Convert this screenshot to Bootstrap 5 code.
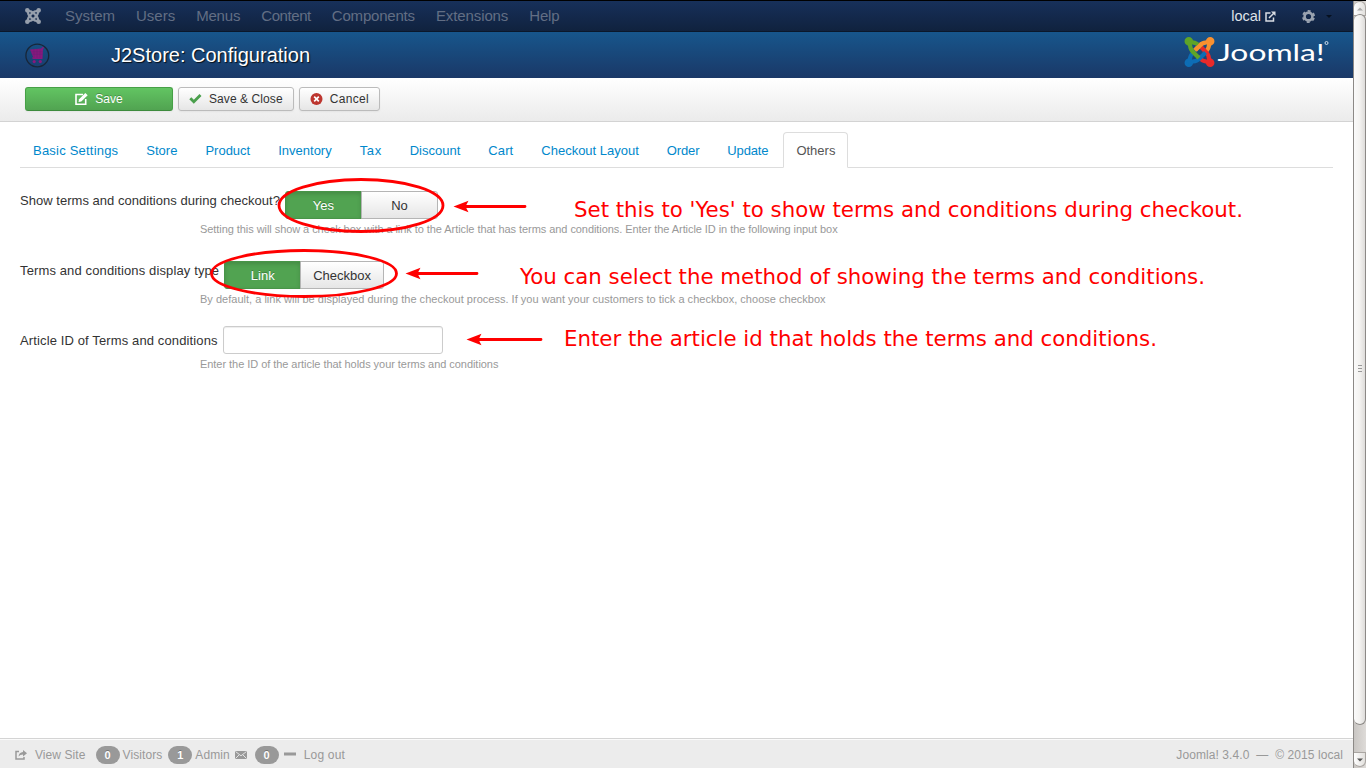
<!DOCTYPE html>
<html lang="en">
<head>
<meta charset="utf-8">
<meta name="viewport" content="width=device-width, initial-scale=1">
<title>J2Store: Configuration</title>
<link href="https://cdn.jsdelivr.net/npm/bootstrap@5.3.0/dist/css/bootstrap.min.css" rel="stylesheet">
<style>
body{font-family:"Liberation Sans",Arial,sans-serif;font-size:13px;line-height:18px;color:#333;height:768px;overflow:hidden;background:#fff}
.shell{height:768px;border-top:1px solid #000}
.topbar{height:31px;background:linear-gradient(#17305a,#10223e);border-bottom:1px solid #0b182b;padding:0 24px 0 25px;font-size:15px}
.topbar .nav-link{padding:0;color:#626e84;line-height:30px}
.menu-list{gap:21px;margin-left:24px}
.menu-list :nth-child(3),.menu-list :nth-child(5),.menu-list :nth-child(7){letter-spacing:-.2px}
.menu-list :nth-child(4){letter-spacing:-.42px}
.menu-list :nth-child(6){letter-spacing:-.1px}
.site-link{color:#dfe2e8;font-size:14.5px}
.titlebar{height:46px;background:linear-gradient(#17568c,#1a3867);padding:0 24px 0 25px}
.page-name{font-size:20px;line-height:46px;color:#fff;text-shadow:1px 1px 1px rgba(0,0,0,.8);margin:0 0 0 61px;font-weight:400}
.toolstrip{height:44px;background:linear-gradient(#fff,#ebebeb);border-bottom:1px solid #d3d3d3;padding:9px 25px 0;gap:5px}
.tool{height:24px;border:1px solid #bbb;border-radius:3px;padding:0 10px;font-size:12px;line-height:20px;color:#333;background:linear-gradient(#fff,#e6e6e6);box-shadow:0 1px 2px rgba(0,0,0,.05);letter-spacing:.08px}
.tool svg{margin-right:7px}
.tool-cancel{letter-spacing:.33px}
.tool-save{width:148px;color:#fff;border-color:#46a046 #46a046 #3d8b3d;background:linear-gradient(#62c462,#51a351);text-shadow:0 -1px 0 rgba(0,0,0,.25)}
.tabs{margin:10px 20px 0;border-bottom:1px solid #ddd;gap:2px}
.tabs .nav-link{padding:9px 12px 7px;line-height:18px;height:36px;color:#08c;border-radius:4px 4px 0 0;margin-bottom:-1px}
.tabs .nav-link.active{color:#555;border-color:#ddd #ddd #fff}
.tabs :nth-child(1){letter-spacing:.21px}
.tabs :nth-child(5){letter-spacing:.6px}
.tabs :nth-child(7){letter-spacing:.1px}
.tabs :nth-child(9),.tabs :nth-child(10){letter-spacing:-.15px}
.settings{padding:23px 20px 0}
.setting{height:70px}
.setting.last-one{margin-top:-5px}
.cap{line-height:20px;white-space:nowrap;margin-right:5px;letter-spacing:.125px}
.setting:first-child .cap{letter-spacing:.03px}
.last-one .cap{line-height:30px}
.hint{font-size:11px;line-height:18px;color:#999;margin:1px 0 0 180px;white-space:nowrap;letter-spacing:.015px}
.setting:first-child .hint{letter-spacing:-.062px}
.last-one .hint{margin-top:-1px;letter-spacing:-.048px}
.pick{height:28px}
.pick .btn{min-width:77px;height:28px;padding:2px 12px 0;font-size:13px;line-height:24px;border:1px solid #b5b5b5;color:#333;background:linear-gradient(#fff,#e6e6e6);border-radius:3px}
.pick .btn.on{color:#fff;background:#51a351;border-color:#489548;box-shadow:inset 0 2px 4px rgba(0,0,0,.15);text-shadow:0 -1px 0 rgba(0,0,0,.25)}
.field{width:220px;height:28px;border:1px solid #ccc;border-radius:3px;box-shadow:inset 0 1px 1px rgba(0,0,0,.075);padding:4px 6px}
.status{height:30px;margin-top:auto;border-top:1px solid #d4d4d4;background:#ececec;box-shadow:inset 0 1px #fbfbfb;font-size:12px;color:#999;padding:2px 10px 0 15px;letter-spacing:.08px}
.pill{width:24px;height:18px;border-radius:9px;background:#999;color:#fff;font-size:11px;font-weight:700;line-height:18px;text-align:center;text-shadow:0 -1px 0 rgba(0,0,0,.25)}
.rail{width:13px;background:linear-gradient(90deg,#c9c6c3,#dedbd8);border-left:1px solid #8c8986;padding-bottom:1px}
.rail-end{height:15px;background:linear-gradient(90deg,#fff,#e2e0dd);border:1px solid #aaa6a2;border-left:0}
.thumb{height:711px;margin-top:-2px;padding-bottom:3px;gap:2px;background:linear-gradient(90deg,#fafafa,#f4f3f1 50%,#dedcda);border:1px solid #8c8986;border-left:0;border-radius:6px}
.thumb i{width:4px;height:1px;background:#999}
.notes{left:0;top:0;pointer-events:none}
.notes text{font-family:"DejaVu Sans",sans-serif;font-size:21.33px;fill:#f00}
</style>
</head>
<body>
<svg width="0" height="0" class="position-absolute">
  <defs>
    <g id="arm" fill="none"><circle cx="4.300" cy="4.300" r="2.100" stroke-width="4.300"/><path stroke-width="4.200" d="M4 4L9 5.700C12 5.700 13 7 16.500 10.500M4 4L5.700 9C5.700 12 6.500 13 9 15.500L14.500 21"/></g>
  </defs>
</svg>
<div class="shell d-flex">
  <div class="flex-grow-1 d-flex flex-column">
    <nav class="topbar d-flex align-items-center">
      <svg width="16" height="16" viewBox="0 0 30 30" stroke="#969fac"><use href="#arm"/><use href="#arm" transform="rotate(90 15 15)"/><use href="#arm" transform="rotate(180 15 15)"/><use href="#arm" transform="rotate(270 15 15)"/></svg>
      <div class="nav menu-list">
        <a class="nav-link">System</a><a class="nav-link">Users</a><a class="nav-link">Menus</a><a class="nav-link">Content</a><a class="nav-link">Components</a><a class="nav-link">Extensions</a><a class="nav-link">Help</a>
      </div>
      <span class="ms-auto site-link">local</span>
      <svg class="ms-1" width="11" height="11" viewBox="0 0 11 11" fill="none" stroke="#d9dde3" stroke-width="1.500"><path d="M5.500 2H1v8h7.500V6.500M4 7l5-5"/><path d="M6 .5h4.500V5z" fill="#d9dde3" stroke="none"/></svg>
      <svg style="margin-left:26px" width="13" height="13" viewBox="0 0 14 14" fill="none" stroke="#9aa3b0"><circle cx="7" cy="7" r="4.200" stroke-width="2.800"/><circle cx="7" cy="7" r="6" stroke-width="2" stroke-dasharray="3.200 3.083" stroke-dashoffset="-1.540"/></svg>
      <svg style="margin-left:10px;margin-right:-4px" width="8" height="5" viewBox="0 0 8 5"><path d="M1 1h6L4 4z" fill="#06101f"/></svg>
    </nav>
    <header class="titlebar d-flex align-items-center">
      <svg width="25" height="25" viewBox="0 0 25 25"><circle cx="12.300" cy="12.500" r="11.400" fill="none" stroke="#182638" stroke-width="1.300"/><path d="M5 6.500l11.500-1 .5-1.200h2v1.200h-1L17.500 16H7.500l-.3-1.800h1z" fill="#89187d"/><path d="M6 8.700h11.500M6.500 11.300h11M9 6v9M12 6v9M15 6v9" stroke="#5c2676" stroke-width=".35"/><circle cx="9.200" cy="18.600" r="1.600" fill="#89187d"/><circle cx="15.300" cy="18.600" r="1.600" fill="#89187d"/></svg>
      <h1 class="page-name">J2Store: Configuration</h1>
      <svg class="ms-auto" style="margin-top:-6px" width="145" height="32" viewBox="0 0 145 32">
        <g transform="translate(.5 1)"><use href="#arm" stroke="#f9912f" transform="rotate(90 15 15)"/><use href="#arm" stroke="#e82a2a" transform="rotate(180 15 15)"/><use href="#arm" stroke="#0d6db5" transform="rotate(270 15 15)"/><use href="#arm" stroke="#5fa427"/><path d="M17.500 6.500L11 13" stroke="#f9912f" stroke-width="4.200"/></g>
        <text x="33.500" y="25" textLength="107" lengthAdjust="spacingAndGlyphs" font-family="Lato" font-weight="400" font-size="24" fill="#fff">Joomla!</text>
        <circle cx="142.500" cy="7" r="1.500" fill="none" stroke="#dfe9f2" stroke-width=".9"/>
      </svg>
    </header>
    <div class="toolstrip d-flex">
      <button class="tool tool-save d-flex align-items-center justify-content-center"><svg width="13" height="12" viewBox="0 0 13 12"><path d="M8 1.500H1v9.700h9.700V6" fill="none" stroke="#fff" stroke-width="1.600"/><path d="M3.500 9l.6-2.700L10.300 0l2.400 2.200L6.300 8.500z" fill="#fff"/></svg>Save</button>
      <button class="tool d-flex align-items-center"><svg width="13" height="11" viewBox="0 0 13 11"><path d="M1.300 4.200l3.500 3.600L11.500 1" fill="none" stroke="#4a9f4c" stroke-width="2.800"/></svg>Save &amp; Close</button>
      <button class="tool tool-cancel d-flex align-items-center"><svg width="13" height="13" viewBox="0 0 13 13"><circle cx="6.500" cy="6" r="6" fill="#bd362f"/><path d="M4.200 3.700l4.600 4.600m0-4.600L4.200 8.300" stroke="#fff" stroke-width="1.700"/></svg>Cancel</button>
    </div>
    <div class="nav nav-tabs tabs">
      <a class="nav-link">Basic Settings</a><a class="nav-link">Store</a><a class="nav-link">Product</a><a class="nav-link">Inventory</a><a class="nav-link">Tax</a><a class="nav-link">Discount</a><a class="nav-link">Cart</a><a class="nav-link">Checkout Layout</a><a class="nav-link">Order</a><a class="nav-link">Update</a><a class="nav-link active">Others</a>
    </div>
    <main class="settings">
      <div class="setting">
        <div class="d-flex align-items-start"><label class="cap">Show terms and conditions during checkout?</label>
          <div class="btn-group pick"><button class="btn on">Yes</button><button class="btn">No</button></div></div>
        <p class="hint">Setting this will show a check box with a link to the Article that has terms and conditions. Enter the Article ID in the following input box</p>
      </div>
      <div class="setting">
        <div class="d-flex align-items-start"><label class="cap">Terms and conditions display type</label>
          <div class="btn-group pick"><button class="btn on">Link</button><button class="btn">Checkbox</button></div></div>
        <p class="hint">By default, a link will be displayed during the checkout process. If you want your customers to tick a checkbox, choose checkbox</p>
      </div>
      <div class="setting last-one">
        <div class="d-flex align-items-start"><label class="cap" for="article">Article ID of Terms and conditions</label><input id="article" class="field"></div>
        <p class="hint">Enter the ID of the article that holds your terms and conditions</p>
      </div>
    </main>
    <footer class="status d-flex align-items-center">
      <svg width="12" height="10" viewBox="0 0 12 10"><path d="M4 1.500H1v7.500h8V7" fill="none" stroke="#999" stroke-width="1.500"/><path d="M8 0l4 3.200-4 3.200V4.500Q5 4.500 3.500 6.500 4 2.300 8 2z" fill="#999"/></svg>
      <span style="margin-left:8px">View Site</span>
      <span class="pill" style="margin-left:10px">0</span><span style="margin-left:3px">Visitors</span>
      <span class="pill" style="margin-left:6px">1</span><span style="margin-left:3px">Admin</span>
      <svg style="margin-left:5px" width="12" height="8" viewBox="0 0 12 8"><path fill="#999" d="M0 0h12v8H0z"/><path d="M.5.5L6 4.800 11.500.5M.5 7.500L4 4m7.500 3.500L8 4" fill="none" stroke="#ececec" stroke-width=".9"/></svg>
      <span class="pill" style="margin-left:8px">0</span>
      <svg style="margin-left:5px" width="12" height="8" viewBox="0 0 12 8"><path fill="#999" d="M0 1.500h12v3H0z"/></svg>
      <span style="margin-left:8px;letter-spacing:.2px">Log out</span>
      <span class="ms-auto" style="white-space:pre">Joomla! 3.4.0  —  © 2015 local</span>
    </footer>
  </div>
  <div class="rail d-flex flex-column">
    <div class="rail-end rounded-top-3 text-center"><svg class="d-block mx-auto mt-1" width="6" height="6" viewBox="0 0 6 6"><path d="M0 4.500L3 1.500l3 3z" fill="#aaa"/></svg></div>
    <div class="thumb d-flex flex-column align-items-center justify-content-center"><i></i><i></i><i></i></div>
    <div class="rail-end rounded-bottom-3 mt-auto"><svg class="d-block mx-auto mt-1" width="6" height="6" viewBox="0 0 6 6"><path d="M0 1.500h6l-3 3z" fill="#555"/></svg></div>
  </div>
</div>
<svg class="notes position-absolute" width="1366" height="768" viewBox="0 0 1366 768">
  <g fill="none" stroke="#f00" stroke-width="2.800"><ellipse cx="361" cy="205.500" rx="82" ry="26"/><ellipse cx="304" cy="273.500" rx="92.500" ry="23"/>
  <path stroke-linecap="round" d="M464 206.500h61M416 273.500h61M478 339.500h63"/></g>
  <g fill="#f00"><path id="tip" d="M453.500 206.500l15-5.700-3 5.700 3 5.700z"/><use href="#tip" x="-48" y="67"/><use href="#tip" x="13" y="133"/></g>
  <text x="574" y="217" textLength="669">Set this to 'Yes' to show terms and conditions during checkout.</text>
  <text x="520" y="284" textLength="685">You can select the method of showing the terms and conditions.</text>
  <text x="564" y="346" textLength="593">Enter the article id that holds the terms and conditions.</text>
</svg>
<script src="https://cdn.jsdelivr.net/npm/bootstrap@5.3.0/dist/js/bootstrap.bundle.min.js"></script>
</body>
</html>
